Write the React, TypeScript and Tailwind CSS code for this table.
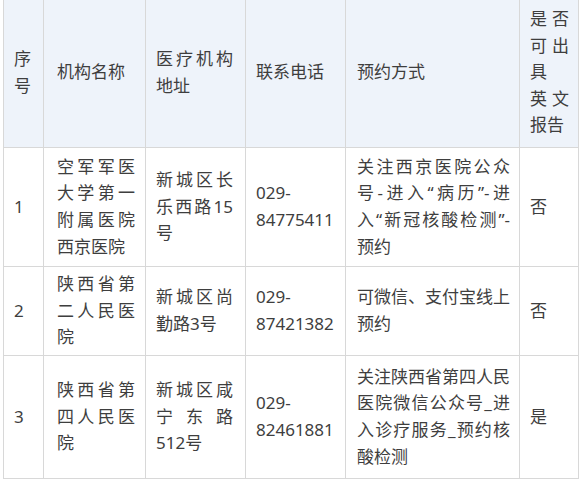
const rows = [
  {
    no: "1",
    name: "空军军医大学第一附属医院西京医院",
    addr: "新城区长乐西路15号",
    tel: "029-84775411",
    way: "关注西京医院公众号-进入“病历”-进入“新冠核酸检测”-预约",
    en: "否",
    h: "h-[119px]",
  },
  {
    no: "2",
    name: "陕西省第二人民医院",
    addr: "新城区尚勤路3号",
    tel: "029-87421382",
    way: "可微信、支付宝线上预约",
    en: "否",
    h: "h-[89px]",
  },
  {
    no: "3",
    name: "陕西省第四人民医院",
    addr: "新城区咸宁东路512号",
    tel: "029-82461881",
    way: "关注陕西省第四人民医院微信公众号_进入诊疗服务_预约核酸检测",
    en: "是",
    h: "h-[123px]",
  },
];

const cell = "border border-[#d8d8d8] align-middle text-justify";

export default function App() {
  return (
    <div
      className="w-[584px] h-[481px] overflow-hidden bg-white pl-[3px] text-[17px] leading-[26.6px] text-[#3e3e3e]"
      style={{ fontFamily: '"Noto Sans", "Noto Sans CJK SC", sans-serif' }}
    >
      <table className="mt-[-3px] border-collapse table-fixed w-[575px]">
        <colgroup>
          <col className="w-[40px]" />
          <col className="w-[102px]" />
          <col className="w-[100px]" />
          <col className="w-[100px]" />
          <col className="w-[174px]" />
          <col className="w-[59px]" />
        </colgroup>
        <thead>
          <tr className="h-[150px] bg-[#eef3fa]">
            <th className={`${cell} font-normal pl-[10px] pr-[8px]`}>序号</th>
            <th className={`${cell} font-normal pl-[13px] pr-[10px]`}>机构名称</th>
            <th className={`${cell} font-normal pl-[10px] pr-[12px]`}>医疗机构地址</th>
            <th className={`${cell} font-normal pl-[10px] pr-[10px]`}>联系电话</th>
            <th className={`${cell} font-normal pl-[11px] pr-[9px]`}>预约方式</th>
            <th className={`${cell} font-normal pl-[10px] pr-[9px]`}>
              是否可出具
              <br />
              英文报告
            </th>
          </tr>
        </thead>
        <tbody>
          {rows.map((r) => (
            <tr key={r.no} className={r.h}>
              <td className={`${cell} pl-[10px] pr-[8px]`}>{r.no}</td>
              <td className={`${cell} pl-[13px] pr-[10px]`}>{r.name}</td>
              <td className={`${cell} pl-[10px] pr-[12px]`}>{r.addr}</td>
              <td className={`${cell} pl-[10px] pr-[10px]`}>{r.tel}</td>
              <td className={`${cell} pl-[11px] pr-[9px]`}>{r.way}</td>
              <td className={`${cell} pl-[10px] pr-[9px]`}>{r.en}</td>
            </tr>
          ))}
        </tbody>
      </table>
    </div>
  );
}
